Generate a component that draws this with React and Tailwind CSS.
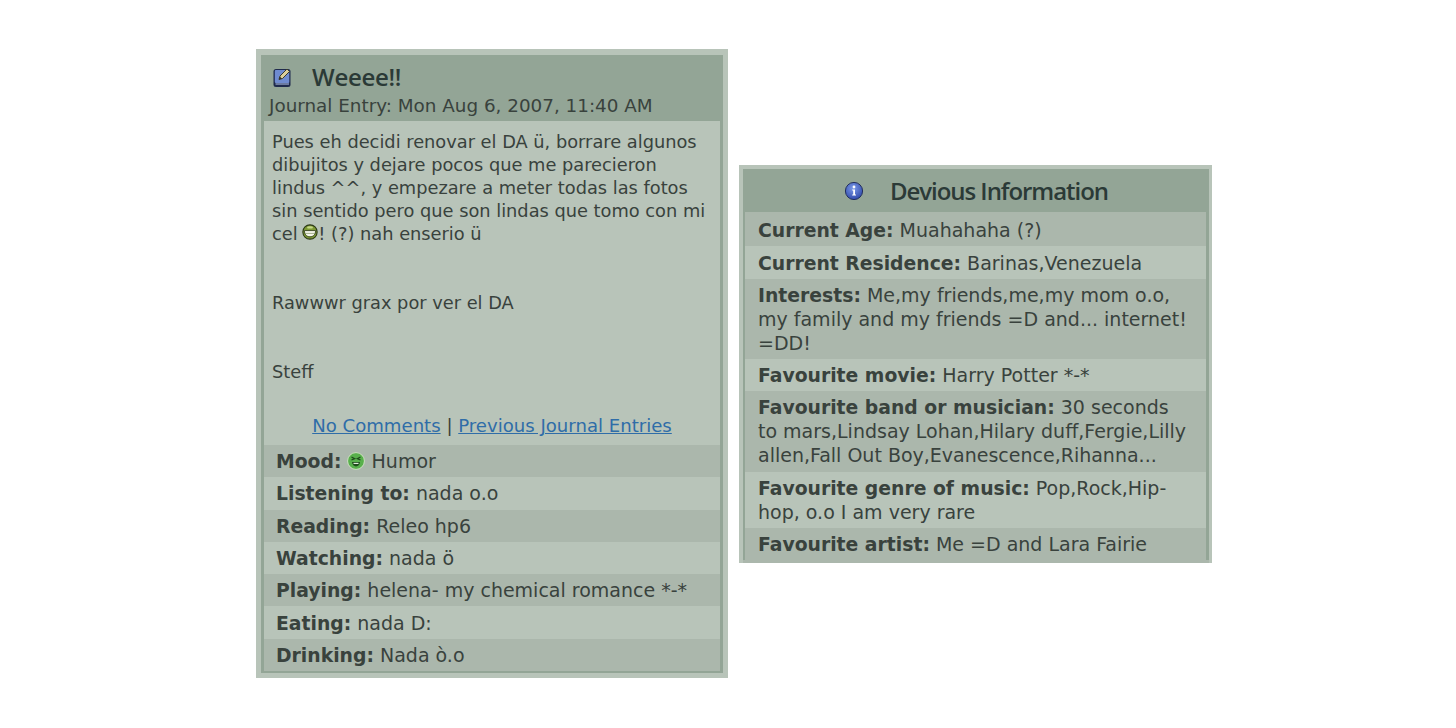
import React from 'react';

const MOOD_ROWS = [
  { label: 'Listening to:', value: 'nada o.o' },
  { label: 'Reading:', value: 'Releo hp6', dark: true },
  { label: 'Watching:', value: 'nada ö' },
  { label: 'Playing:', value: 'helena- my chemical romance *-*', dark: true },
  { label: 'Eating:', value: 'nada D:' },
  { label: 'Drinking:', value: 'Nada ò.o', dark: true },
];

const INFO_ROWS = [
  { label: 'Current Age:', value: 'Muahahaha (?)', dark: true, first: true },
  { label: 'Current Residence:', value: 'Barinas,Venezuela' },
  { label: 'Interests:', value: 'Me,my friends,me,my mom o.o, my family and my friends =D and... internet! =DD!', dark: true },
  { label: 'Favourite movie:', value: 'Harry Potter *-*' },
  { label: 'Favourite band or musician:', value: '30 seconds to mars,Lindsay Lohan,Hilary duff,Fergie,Lilly allen,Fall Out Boy,Evanescence,Rihanna...', dark: true },
  { label: 'Favourite genre of music:', value: 'Pop,Rock,Hip-hop, o.o I am very rare' },
  { label: 'Favourite artist:', value: 'Me =D and Lara Fairie', dark: true },
];

const JournalIcon = () => (
  <svg width="22" height="22" viewBox="0 0 22 22" className="shrink-0">
    <rect x="2.5" y="3" width="17" height="18" rx="2.5" fill="#1f2a4d" />
    <rect x="3.8" y="4" width="14.5" height="13" rx="1" fill="#6f8bd0" />
    <rect x="4.5" y="17.4" width="13.5" height="1.2" fill="#9fb0d8" />
    <path d="M8 13.5 L9 10 L16 3 L18.5 5.5 L11.5 12.5 Z" fill="#dccf9c" stroke="#3a3a2c" strokeWidth="1" />
    <path d="M8 13.5 L9 10.8 L10.8 12.4 Z" fill="#2c2c22" />
  </svg>
);

const InfoIcon = () => (
  <svg width="20" height="20" viewBox="0 0 20 20" className="shrink-0">
    <defs>
      <radialGradient id="infoBlue" cx="45%" cy="35%" r="70%">
        <stop offset="0%" stopColor="#7d9be8" />
        <stop offset="100%" stopColor="#2b45a8" />
      </radialGradient>
    </defs>
    <circle cx="10" cy="10" r="8.6" fill="url(#infoBlue)" stroke="#23305f" strokeWidth="1" />
    <circle cx="10" cy="6" r="1.4" fill="#fff" />
    <path d="M8.2 8.4 H11 V13.4 H12 V14.6 H8.2 V13.4 H9.2 V9.6 H8.2 Z" fill="#fff" />
  </svg>
);

const GrinIcon = () => (
  <svg width="16" height="16" viewBox="0 0 17 17" className="inline-block align-[0px] -ml-[1px]">
    <circle cx="8.5" cy="8.5" r="7.6" fill="#7d9a35" stroke="#2d3a18" strokeWidth="1.2" />
    <ellipse cx="8.5" cy="3.6" rx="3.2" ry="1.3" fill="#c6d88a" />
    <path d="M2.6 7 H14.4 C14.5 11 12.2 13.6 8.5 13.6 C4.8 13.6 2.5 11 2.6 7 Z" fill="#f4f6ea" stroke="#2d3a18" strokeWidth="0.9" />
    <path d="M3.2 10 H13.8" stroke="#8a9a70" strokeWidth="0.8" />
  </svg>
);

const LaughIcon = () => (
  <svg width="18" height="18" viewBox="0 0 18 18" className="inline-block align-[-2px] -ml-[1px] mr-[1px]">
    <circle cx="9" cy="9" r="8.4" fill="#58b04c" stroke="#d5e4c8" strokeWidth="0.9" />
    <path d="M4.5 5 L7.6 6.6 L4.5 8 M13.5 5 L10.4 6.6 L13.5 8" fill="none" stroke="#1f4a1c" strokeWidth="1.3" />
    <path d="M5 10 H13 C12.8 12.8 11 14.4 9 14.4 C7 14.4 5.2 12.8 5 10 Z" fill="#1f4a1c" />
    <path d="M6.5 10.8 H11.5 V12 H6.5 Z" fill="#dfeeda" />
  </svg>
);

const Row = ({ label, value, dark, icon, first, className }) => (
  <div className={`pb-[4.1px] leading-[24px] text-[19px] ${first ? 'pt-[6.3px]' : 'pt-[4.2px]'} ${dark ? 'bg-[#abb7ac]' : 'bg-[#b8c4b9]'} ${className}`}>
    <b className="font-bold text-[18.8px] leading-none">{label}</b> {icon} {value}
  </div>
);

export default function App() {
  return (
    <div className="min-h-[728px] bg-white flex items-start gap-[11px] pl-[256px] pt-[49px] text-[#39423d] font-['DejaVu_Sans','Liberation_Sans',sans-serif]">

      {/* JOURNAL */}
      <div className="w-[472px] border-[5px] border-t-[6px] border-[#b8c4b9] bg-[#93a596]">
        <div className="border-[3px] border-t-0 border-b-[2px] border-[#93a596]">
          <div className="-mx-[3px] h-[66px] px-[8px] pt-[7px] bg-[#93a596]">
            <div className="flex items-center h-[30px] pl-[2px] gap-[19px]">
              <JournalIcon />
              <h1 className="text-[24px] tracking-[-0.3px] font-['Open_Sans','DejaVu_Sans',sans-serif] font-semibold text-[#2b3a37]">Weeee!!</h1>
            </div>
            <div className="mt-[2px] leading-[24px] text-[18.35px]">Journal Entry: Mon Aug 6, 2007, 11:40 AM</div>
          </div>
          <div className="bg-[#b8c4b9] px-[8px] pt-[9px] pb-[8px] leading-[23px] text-[17.8px]">
            <p>
              Pues eh decidi renovar el DA ü, borrare algunos dibujitos y dejare pocos que me parecieron lindus ^^, y empezare a meter todas las fotos sin sentido pero que son lindas que tomo con mi cel <GrinIcon />! (?) nah enserio ü
            </p>
            <p className="mt-[46px]">Rawwwr grax por ver el DA</p>
            <p className="mt-[46px]">Steff</p>
            <p className="mt-[31px] text-center text-[18.1px]">
              <a href="#" className="underline text-[#2f6da8]">No Comments</a> | <a href="#" className="underline text-[#2f6da8]">Previous Journal Entries</a>
            </p>
          </div>
          <Row label="Mood:" value="Humor" icon={<LaughIcon />} dark className="px-[12px]" />
          {MOOD_ROWS.map((row) => (
            <Row key={row.label} {...row} className="px-[12px]" />
          ))}
        </div>
      </div>

      {/* DEVIOUS INFO */}
      <div className="w-[473px] mt-[116px] h-[398px] overflow-hidden border-l-[4px] border-r-[3px] border-t-[4px] border-[#b8c4b9] bg-[#abb7ac]">
        <div className="border-l-[2px] border-r-[3px] border-[#93a596]">
          <div className="-ml-[2px] -mr-[3px] h-[43px] flex items-center justify-center gap-[26px] bg-[#93a596]">
            <InfoIcon />
            <h2 className="text-[24px] tracking-[-1.05px] font-['Open_Sans','DejaVu_Sans',sans-serif] font-semibold text-[#2b3a37]">Devious Information</h2>
          </div>
          {INFO_ROWS.map((row) => (
            <Row key={row.label} {...row} className="pl-[13px] pr-[14px]" />
          ))}
        </div>
      </div>
    </div>
  );
}
